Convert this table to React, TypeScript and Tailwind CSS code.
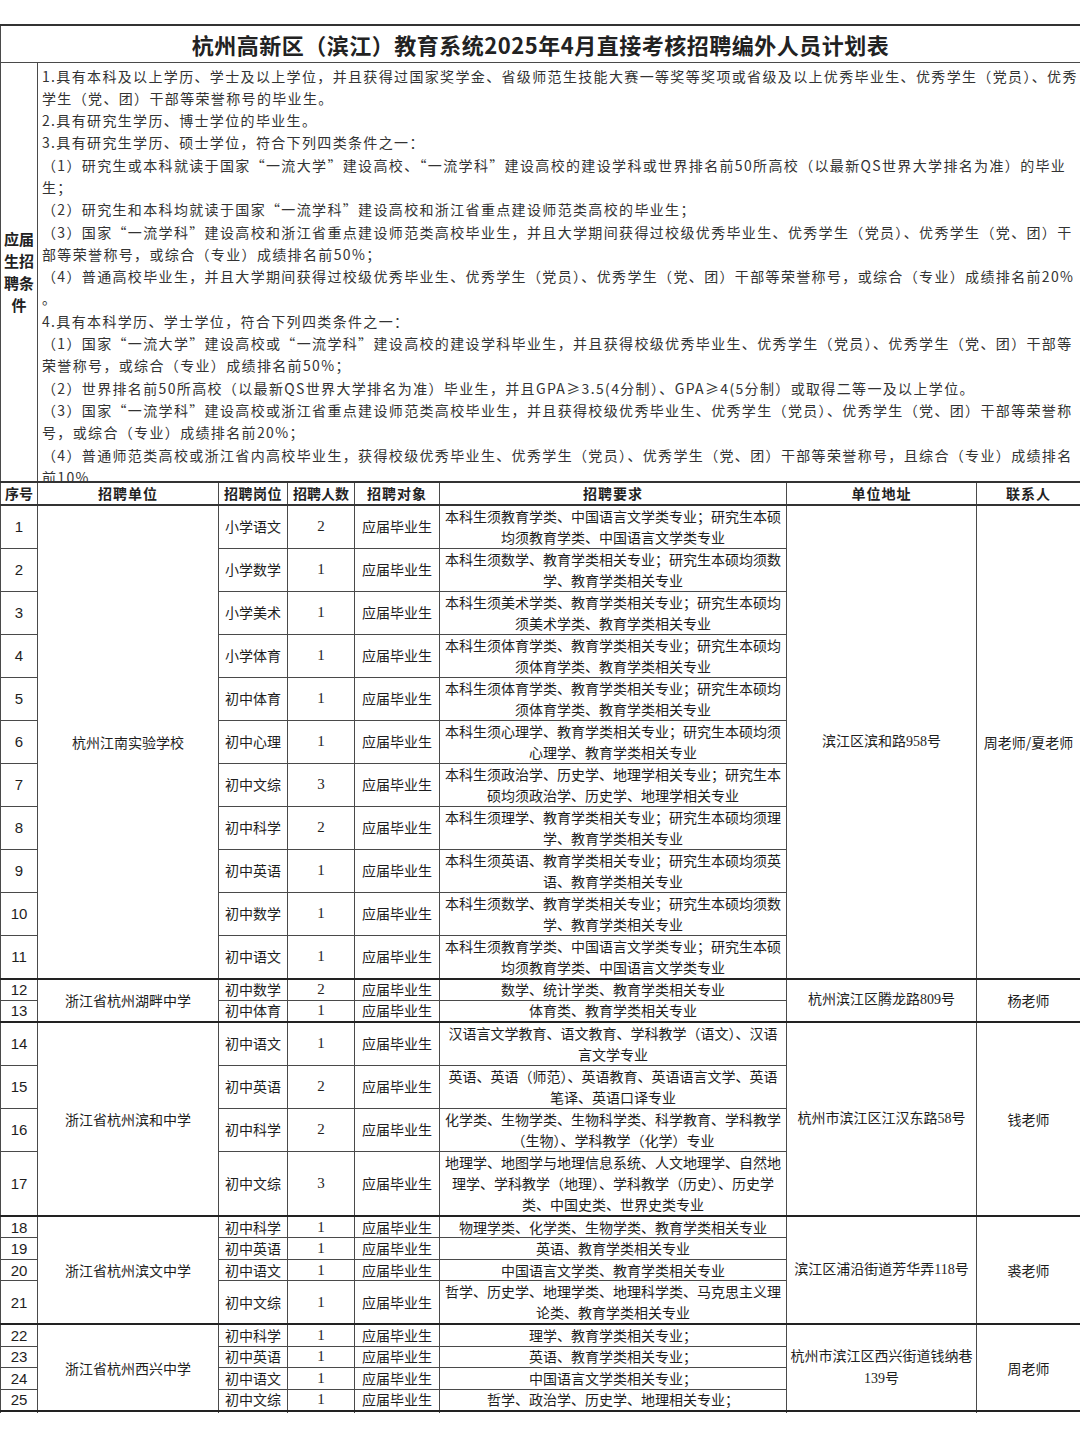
import React from "react";

type Row = { no: number; post: string; count: number; req: string[] };
type Group = { unit: string; addr: string[]; contact: string; rows: Row[] };

const conditions = [
  "1.具有本科及以上学历、学士及以上学位，并且获得过国家奖学金、省级师范生技能大赛一等奖等奖项或省级及以上优秀毕业生、优秀学生（党员）、优秀",
  "学生（党、团）干部等荣誉称号的毕业生。",
  "2.具有研究生学历、博士学位的毕业生。",
  "3.具有研究生学历、硕士学位，符合下列四类条件之一：",
  "（1）研究生或本科就读于国家“一流大学”建设高校、“一流学科”建设高校的建设学科或世界排名前50所高校（以最新QS世界大学排名为准）的毕业",
  "生；",
  "（2）研究生和本科均就读于国家“一流学科”建设高校和浙江省重点建设师范类高校的毕业生；",
  "（3）国家“一流学科”建设高校和浙江省重点建设师范类高校毕业生，并且大学期间获得过校级优秀毕业生、优秀学生（党员）、优秀学生（党、团）干",
  "部等荣誉称号，或综合（专业）成绩排名前50%；",
  "（4）普通高校毕业生，并且大学期间获得过校级优秀毕业生、优秀学生（党员）、优秀学生（党、团）干部等荣誉称号，或综合（专业）成绩排名前20%",
  "。",
  "4.具有本科学历、学士学位，符合下列四类条件之一：",
  "（1）国家“一流大学”建设高校或“一流学科”建设高校的建设学科毕业生，并且获得校级优秀毕业生、优秀学生（党员）、优秀学生（党、团）干部等",
  "荣誉称号，或综合（专业）成绩排名前50%；",
  "（2）世界排名前50所高校（以最新QS世界大学排名为准）毕业生，并且GPA≥3.5(4分制）、GPA≥4(5分制）或取得二等一及以上学位。",
  "（3）国家“一流学科”建设高校或浙江省重点建设师范类高校毕业生，并且获得校级优秀毕业生、优秀学生（党员）、优秀学生（党、团）干部等荣誉称",
  "号，或综合（专业）成绩排名前20%；",
  "（4）普通师范类高校或浙江省内高校毕业生，获得校级优秀毕业生、优秀学生（党员）、优秀学生（党、团）干部等荣誉称号，且综合（专业）成绩排名",
  "前10%",
];

const groups: Group[] = [
  {
    unit: "杭州江南实验学校",
    addr: ["滨江区滨和路958号"],
    contact: "周老师/夏老师",
    rows: [
      { no: 1, post: "小学语文", count: 2, req: ["本科生须教育学类、中国语言文学类专业；研究生本硕", "均须教育学类、中国语言文学类专业"] },
      { no: 2, post: "小学数学", count: 1, req: ["本科生须数学、教育学类相关专业；研究生本硕均须数", "学、教育学类相关专业"] },
      { no: 3, post: "小学美术", count: 1, req: ["本科生须美术学类、教育学类相关专业；研究生本硕均", "须美术学类、教育学类相关专业"] },
      { no: 4, post: "小学体育", count: 1, req: ["本科生须体育学类、教育学类相关专业；研究生本硕均", "须体育学类、教育学类相关专业"] },
      { no: 5, post: "初中体育", count: 1, req: ["本科生须体育学类、教育学类相关专业；研究生本硕均", "须体育学类、教育学类相关专业"] },
      { no: 6, post: "初中心理", count: 1, req: ["本科生须心理学、教育学类相关专业；研究生本硕均须", "心理学、教育学类相关专业"] },
      { no: 7, post: "初中文综", count: 3, req: ["本科生须政治学、历史学、地理学相关专业；研究生本", "硕均须政治学、历史学、地理学相关专业"] },
      { no: 8, post: "初中科学", count: 2, req: ["本科生须理学、教育学类相关专业；研究生本硕均须理", "学、教育学类相关专业"] },
      { no: 9, post: "初中英语", count: 1, req: ["本科生须英语、教育学类相关专业；研究生本硕均须英", "语、教育学类相关专业"] },
      { no: 10, post: "初中数学", count: 1, req: ["本科生须数学、教育学类相关专业；研究生本硕均须数", "学、教育学类相关专业"] },
      { no: 11, post: "初中语文", count: 1, req: ["本科生须教育学类、中国语言文学类专业；研究生本硕", "均须教育学类、中国语言文学类专业"] },
    ],
  },
  {
    unit: "浙江省杭州湖畔中学",
    addr: ["杭州滨江区腾龙路809号"],
    contact: "杨老师",
    rows: [
      { no: 12, post: "初中数学", count: 2, req: ["数学、统计学类、教育学类相关专业"] },
      { no: 13, post: "初中体育", count: 1, req: ["体育类、教育学类相关专业"] },
    ],
  },
  {
    unit: "浙江省杭州滨和中学",
    addr: ["杭州市滨江区江汉东路58号"],
    contact: "钱老师",
    rows: [
      { no: 14, post: "初中语文", count: 1, req: ["汉语言文学教育、语文教育、学科教学（语文）、汉语", "言文学专业"] },
      { no: 15, post: "初中英语", count: 2, req: ["英语、英语（师范）、英语教育、英语语言文学、英语", "笔译、英语口译专业"] },
      { no: 16, post: "初中科学", count: 2, req: ["化学类、生物学类、生物科学类、科学教育、学科教学", "（生物）、学科教学（化学）专业"] },
      { no: 17, post: "初中文综", count: 3, req: ["地理学、地图学与地理信息系统、人文地理学、自然地", "理学、学科教学（地理）、学科教学（历史）、历史学", "类、中国史类、世界史类专业"] },
    ],
  },
  {
    unit: "浙江省杭州滨文中学",
    addr: ["滨江区浦沿街道芳华弄118号"],
    contact: "裘老师",
    rows: [
      { no: 18, post: "初中科学", count: 1, req: ["物理学类、化学类、生物学类、教育学类相关专业"] },
      { no: 19, post: "初中英语", count: 1, req: ["英语、教育学类相关专业"] },
      { no: 20, post: "初中语文", count: 1, req: ["中国语言文学类、教育学类相关专业"] },
      { no: 21, post: "初中文综", count: 1, req: ["哲学、历史学、地理学类、地理科学类、马克思主义理", "论类、教育学类相关专业"] },
    ],
  },
  {
    unit: "浙江省杭州西兴中学",
    addr: ["杭州市滨江区西兴街道钱纳巷", "139号"],
    contact: "周老师",
    rows: [
      { no: 22, post: "初中科学", count: 1, req: ["理学、教育学类相关专业；"] },
      { no: 23, post: "初中英语", count: 1, req: ["英语、教育学类相关专业；"] },
      { no: 24, post: "初中语文", count: 1, req: ["中国语言文学类相关专业；"] },
      { no: 25, post: "初中文综", count: 1, req: ["哲学、政治学、历史学、地理相关专业；"] },
    ],
  },
];

const cell = "border border-[#4a4a4a] p-0 text-center align-middle";

function rowHeight(lines: number) {
  if (lines >= 3) return "h-[65px] leading-[21px]";
  if (lines === 2) return "h-[43px] leading-[21px]";
  return "h-[21.6px] leading-[19px]";
}

export default function App() {
  return (
    <div className="min-h-[1443px] w-[1080px] bg-white pt-[24px] font-['Noto_Sans_CJK_SC',sans-serif] text-[#1e1e1e]">
      {/* the scan ends just below row 25, the table runs on past the edge */}
      <div className="h-[1389px] overflow-hidden">
        <table className="w-[1080px] table-fixed border-collapse">
          <colgroup>
            <col className="w-[37px]" />
            <col className="w-[181px]" />
            <col className="w-[69px]" />
            <col className="w-[67px]" />
            <col className="w-[85px]" />
            <col className="w-[347px]" />
            <col className="w-[190px]" />
            <col className="w-[104px]" />
          </colgroup>
          <tbody>
            {/* title */}
            <tr className="h-[37px]">
              <td colSpan={8} className={`${cell} border-t-2 border-t-[#333] text-[22px] font-bold leading-none tracking-[0.5px] text-[#222]`}>
                杭州高新区（滨江）教育系统2025年4月直接考核招聘编外人员计划表
              </td>
            </tr>

            {/* conditions */}
            <tr className="h-[419px]">
              <td className={`${cell} text-[15px] font-bold leading-[22px] text-[#222]`}>
                应届
                <br />
                生招
                <br />
                聘条
                <br />
                件
              </td>
              <td colSpan={7} className={`${cell} text-left align-top`}>
                <div className="h-[418px] overflow-hidden pl-[4px] pt-[2px] text-[14px] leading-[22.3px] tracking-[1.35px] text-[#333]">
                  {conditions.map((l, i) => (
                    <div key={i} className="whitespace-nowrap">
                      {l}
                    </div>
                  ))}
                </div>
              </td>
            </tr>

            {/* header */}
            <tr className="h-[23px] text-[14px] font-bold leading-[20px] tracking-[1px] text-[#222]">
              <td className={`${cell} border-t-2 border-t-[#333] border-b-2 border-b-[#333] tracking-[0px]`}>序号</td>
              <td className={`${cell} border-t-2 border-t-[#333] border-b-2 border-b-[#333]`}>招聘单位</td>
              <td className={`${cell} border-t-2 border-t-[#333] border-b-2 border-b-[#333] tracking-[0.5px]`}>招聘岗位</td>
              <td className={`${cell} border-t-2 border-t-[#333] border-b-2 border-b-[#333] tracking-[0px]`}>招聘人数</td>
              <td className={`${cell} border-t-2 border-t-[#333] border-b-2 border-b-[#333]`}>招聘对象</td>
              <td className={`${cell} border-t-2 border-t-[#333] border-b-2 border-b-[#333]`}>招聘要求</td>
              <td className={`${cell} border-t-2 border-t-[#333] border-b-2 border-b-[#333]`}>单位地址</td>
              <td className={`${cell} border-t-2 border-t-[#333] border-b-2 border-b-[#333]`}>联系人</td>
            </tr>

            {groups.map((g, gi) =>
              g.rows.map((r, ri) => {
                const top = ri === 0 && gi > 0 ? "border-t-2 border-t-[#222]" : "";
                return (
                  <tr key={r.no} className={`${rowHeight(r.req.length)} text-[14px]`}>
                    <td className={`${cell} ${top} font-['Liberation_Sans',sans-serif] text-[15px]`}>{r.no}</td>
                    {ri === 0 && (
                      <td rowSpan={g.rows.length} className={`${cell} ${top} leading-[22px]`}>
                        {g.unit}
                      </td>
                    )}
                    <td className={`${cell} ${top}`}>{r.post}</td>
                    <td className={`${cell} ${top} font-['Liberation_Serif',serif] text-[15px]`}>{r.count}</td>
                    <td className={`${cell} ${top}`}>应届毕业生</td>
                    <td className={`${cell} ${top}`}>
                      {r.req.map((l, i) => (
                        <div key={i} className="whitespace-nowrap">
                          {l}
                        </div>
                      ))}
                    </td>
                    {ri === 0 && (
                      <td rowSpan={g.rows.length} className={`${cell} ${top} font-['Liberation_Serif','Noto_Sans_CJK_SC',serif] leading-[22px]`}>
                        {g.addr.map((a, i) => (
                          <div key={i}>{a}</div>
                        ))}
                      </td>
                    )}
                    {ri === 0 && (
                      <td rowSpan={g.rows.length} className={`${cell} ${top} leading-[22px]`}>
                        {g.contact}
                      </td>
                    )}
                  </tr>
                );
              })
            )}

            {/* next group, cut off by the edge of the scan */}
            <tr className="h-[22px]">
              <td className={`${cell} border-t-2 border-t-[#222]`} />
              <td className={`${cell} border-t-2 border-t-[#222]`} />
              <td className={`${cell} border-t-2 border-t-[#222]`} />
              <td className={`${cell} border-t-2 border-t-[#222]`} />
              <td className={`${cell} border-t-2 border-t-[#222]`} />
              <td className={`${cell} border-t-2 border-t-[#222]`} />
              <td className={`${cell} border-t-2 border-t-[#222]`} />
              <td className={`${cell} border-t-2 border-t-[#222]`} />
            </tr>
          </tbody>
        </table>
      </div>
    </div>
  );
}
